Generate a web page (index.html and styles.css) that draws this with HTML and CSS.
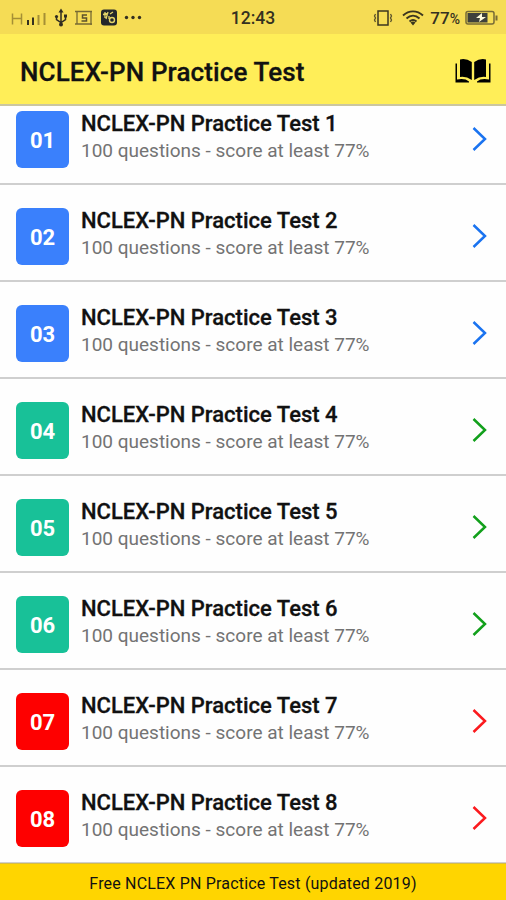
FILE: index.html
```html
<!DOCTYPE html>
<html lang="en">

<head>
    <meta charset="UTF-8" />
    <meta name="viewport" content="width=device-width, initial-scale=1.0" />
    <title>NCLEX-PN Practice Test</title>
    <link rel="stylesheet" href="styles.css">
</head>

<body>
    <div class="status-bar">
        <div class="status-left">
            <svg width="140" height="20" viewBox="0 0 140 20">
                <path d="M1.500 5.500v11M10.500 5.500v11M1.500 10.500h9" fill="none" stroke="#a58f35" stroke-width="1.500" />
                <path d="M17 12v5" stroke="#353120" stroke-width="2" />
                <path d="M22 9.500v7.500" stroke="#353120" stroke-width="2" />
                <path d="M27.500 7v10M33.500 5v12" stroke="#a58f35" stroke-width="2" />
                <g fill="none" stroke="#302c20" stroke-width="1.500">
                    <path d="M50 3v14M45.500 9v2.500l4.500 3 4.500-3V8.500" />
                </g>
                <path d="M50 0.500l-2.500 4h5zM53 6.500h3v3h-3z" fill="#302c20" />
                <circle cx="45.500" cy="8.500" r="1.600" fill="#302c20" />
                <circle cx="50" cy="16.500" r="2" fill="#302c20" />
                <path d="M64 3.500h17M66 3v13M64 16h17M80 4v13" fill="none" stroke="#776a33" stroke-width="1.300" />
                <path d="M76 7h-4.500v3h4v3h-5" fill="none" stroke="#5c522b" stroke-width="1.500" />
                <rect x="90" y="1.500" width="16" height="16" rx="3" fill="#24272b" />
                <path d="M94 4v6M92 6.500l5-1M97 4l-2 7M99 6l3-2M98 8v3" fill="none" stroke="#e4d46a" stroke-width="1.300" />
                <circle cx="101" cy="12" r="2.500" fill="none" stroke="#e4d46a" stroke-width="1.400" />
                <circle cx="115.500" cy="9.500" r="1.700" fill="#343020" />
                <circle cx="122" cy="9.500" r="1.700" fill="#343020" />
                <circle cx="128.500" cy="9.500" r="1.700" fill="#343020" />
            </svg>
        </div>
        <div class="clock">12:43</div>
        <div class="status-right">
            <svg class="vibrate" width="20" height="18" viewBox="0 0 20 18">
                <rect x="5" y="2" width="10" height="14" fill="none" stroke="#3b361f" stroke-width="1.500" />
                <path d="M2.500 5l-1 2 1 2-1 2 1 2M17.500 5l1 2-1 2 1 2-1 2" fill="none" stroke="#5b522b" stroke-width="1.300" />
            </svg>
            <svg class="wifi" width="22" height="16" viewBox="0 0 22 16">
                <path d="M1 5.500c6-5.500 14-5.500 20 0M4.500 8.500c4-3.700 9-3.700 13 0M7.500 11.500c2.300-2 4.700-2 7 0" fill="none" stroke="#3b361f" stroke-width="1.900" />
                <path d="M8.500 12.500q2.500-2 5 0L11 15.500z" fill="#3b361f" />
            </svg>
            <span class="percent">77<small>%</small></span>
            <svg class="battery" width="33" height="16" viewBox="0 0 33 16">
                <rect x="1" y="1.500" width="28" height="12.500" rx="2" fill="#f6df58" stroke="#776b36" stroke-width="1.500" />
                <rect x="2.500" y="3" width="20" height="9.500" fill="#3e403c" />
                <path d="M30.500 5.500h2v5h-2z" fill="#776b36" />
                <path d="M17 3l-6 5h4l-1 4 7-5h-4z" fill="#fffbdc" />
            </svg>
        </div>
    </div>

    <header class="header">
        <h1>NCLEX-PN Practice Test</h1>
        <svg class="book" width="38" height="28" viewBox="0 0 38 28">
            <path d="M6 2.500Q12 1 17.800 5V23Q12 19 6 20zM32 2.500Q26 1 20.200 5V23Q26 19 32 20z" />
            <path d="M1.500 6.500h1.500V22.500q8-1.500 12 2v1H1.500zM36.500 6.500h-1.500V22.500q-8-1.500-12 2v1h13.500z" />
        </svg>
    </header>

    <main class="list">
        <div class="item blue">
            <div class="number">01</div>
            <div class="info">
                <h2>NCLEX-PN Practice Test 1</h2>
                <p>100 questions - score at least 77%</p>
            </div>
            <svg class="arrow" viewBox="0 0 16 26"><path d="M1.500 2l11.500 11-11.500 11" /></svg>
        </div>
        <div class="item blue">
            <div class="number">02</div>
            <div class="info">
                <h2>NCLEX-PN Practice Test 2</h2>
                <p>100 questions - score at least 77%</p>
            </div>
            <svg class="arrow" viewBox="0 0 16 26"><path d="M1.500 2l11.500 11-11.500 11" /></svg>
        </div>
        <div class="item blue">
            <div class="number">03</div>
            <div class="info">
                <h2>NCLEX-PN Practice Test 3</h2>
                <p>100 questions - score at least 77%</p>
            </div>
            <svg class="arrow" viewBox="0 0 16 26"><path d="M1.500 2l11.500 11-11.500 11" /></svg>
        </div>
        <div class="item green">
            <div class="number">04</div>
            <div class="info">
                <h2>NCLEX-PN Practice Test 4</h2>
                <p>100 questions - score at least 77%</p>
            </div>
            <svg class="arrow" viewBox="0 0 16 26"><path d="M1.500 2l11.500 11-11.500 11" /></svg>
        </div>
        <div class="item green">
            <div class="number">05</div>
            <div class="info">
                <h2>NCLEX-PN Practice Test 5</h2>
                <p>100 questions - score at least 77%</p>
            </div>
            <svg class="arrow" viewBox="0 0 16 26"><path d="M1.500 2l11.500 11-11.500 11" /></svg>
        </div>
        <div class="item green">
            <div class="number">06</div>
            <div class="info">
                <h2>NCLEX-PN Practice Test 6</h2>
                <p>100 questions - score at least 77%</p>
            </div>
            <svg class="arrow" viewBox="0 0 16 26"><path d="M1.500 2l11.500 11-11.500 11" /></svg>
        </div>
        <div class="item red">
            <div class="number">07</div>
            <div class="info">
                <h2>NCLEX-PN Practice Test 7</h2>
                <p>100 questions - score at least 77%</p>
            </div>
            <svg class="arrow" viewBox="0 0 16 26"><path d="M1.500 2l11.500 11-11.500 11" /></svg>
        </div>
        <div class="item red">
            <div class="number">08</div>
            <div class="info">
                <h2>NCLEX-PN Practice Test 8</h2>
                <p>100 questions - score at least 77%</p>
            </div>
            <svg class="arrow" viewBox="0 0 16 26"><path d="M1.500 2l11.500 11-11.500 11" /></svg>
        </div>
    </main>

    <footer class="footer">Free NCLEX PN Practice Test (updated 2019)</footer>
</body>

</html>
```

FILE: styles.css
```css
*,
*::before,
*::after {
    box-sizing: border-box;
    margin: 0;
    padding: 0;
}

body {
    height: 100vh;
    display: flex;
    flex-direction: column;
    overflow: hidden;
    font-family: Roboto, sans-serif;
    background: #fefefe;
    color: #111;
}

svg {
    display: block;
    flex-shrink: 0;
}

.status-bar {
    display: grid;
    grid-template-columns: 1fr auto 1fr;
    align-items: center;
    height: 34px;
    flex-shrink: 0;
    padding: 2px 8px 0 11px;
    background: #f5dc55;
    color: #353120;
}

.clock {
    padding: 0 3px 1px 0;
    font-size: 17.5px;
    font-weight: 500;
}

.status-right {
    display: flex;
    align-items: center;
    justify-content: flex-end;
}

.wifi {
    margin: 0 6px 0 9px;
}

.percent {
    font-size: 17px;
    font-weight: 500;
    margin-right: 5px;
}

.percent small {
    font-size: 14px;
}

.header {
    display: flex;
    align-items: center;
    justify-content: space-between;
    height: 72px;
    flex-shrink: 0;
    padding: 4px 14px 0 20px;
    background: #ffee58;
    border-bottom: 2px solid #cbc6a0;
}

.header h1 {
    padding-top: 2px;
    font-size: 26px;
    font-weight: 500;
    line-height: 32px;
    letter-spacing: 0.12px;
    -webkit-text-stroke: 0.3px #111;
}

.list {
    flex: 1;
    min-height: 0;
    overflow: hidden;
}

.item {
    display: flex;
    align-items: flex-start;
    height: 97px;
    padding: 23px 18px 0 16px;
    border-bottom: 2px solid #cfcfcf;
}

/* first row is scrolled partly under the header */
.item:first-child {
    height: 79px;
    padding-top: 5px;
}

.number {
    width: 53px;
    height: 57px;
    margin-right: 12px;
    border-radius: 6px;
    color: #fff;
    font-size: 22px;
    font-weight: 700;
    line-height: 60px;
    text-align: center;
}

.info {
    flex: 1;
    white-space: nowrap;
}

.info h2 {
    font-size: 22px;
    font-weight: 500;
    line-height: 26px;
    -webkit-text-stroke: 0.3px #111;
}

.info p {
    font-size: 19px;
    line-height: 28px;
    color: #737373;
}

.arrow {
    width: 16px;
    height: 26px;
    margin-top: 15px;
    fill: none;
    stroke-width: 2.5;
}

.blue .number {
    background: #3a80fc;
}

.blue .arrow {
    stroke: #1a73f0;
}

.green .number {
    background: #18c198;
}

.green .arrow {
    stroke: #12a01c;
}

.red .number {
    background: #fe0000;
}

.red .arrow {
    stroke: #fb1a1e;
}

.footer {
    height: 37px;
    flex-shrink: 0;
    border-top: 1px solid #d5bc45;
    background: #ffd500;
    font-size: 16px;
    line-height: 39px;
    letter-spacing: 0.18px;
    text-align: center;
}
```
